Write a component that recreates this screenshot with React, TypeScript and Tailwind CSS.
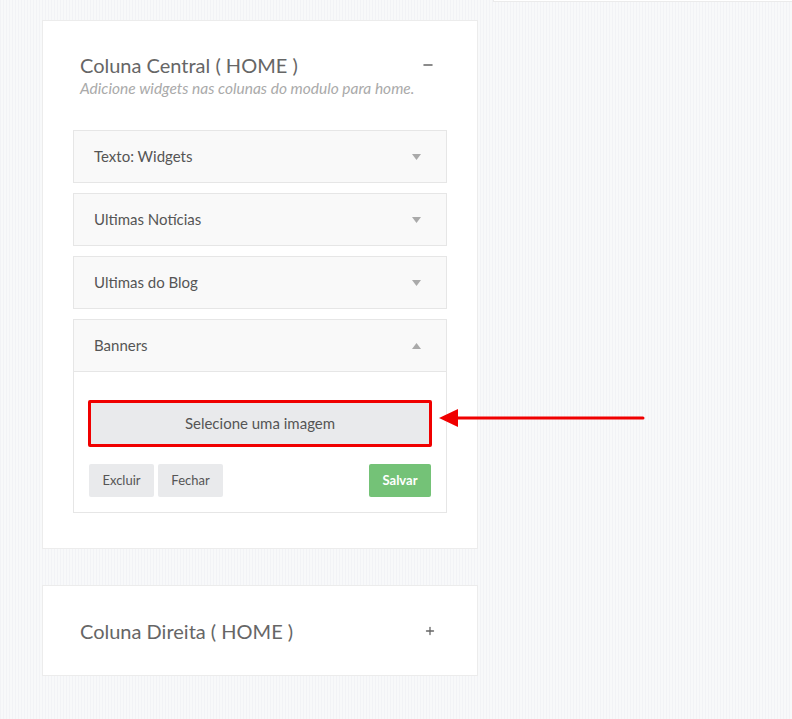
import { Minus, Plus } from 'lucide-react';

const ITEMS = ['Texto: Widgets', 'Ultimas Notícias', 'Ultimas do Blog'];

function Caret({ up }: { up?: boolean }) {
  return (
    <svg width="9" height="6" viewBox="0 0 9 6" className="shrink-0">
      {up ? <path d="M4.5 0L9 6H0z" fill="#aaa" /> : <path d="M0 0h9L4.5 6z" fill="#aaa" />}
    </svg>
  );
}

function WidgetRow({ title }: { title: string }) {
  return (
    <div className="h-[53px] border border-[#e6e6e6] bg-[#f9f9f9] flex items-center justify-between pl-[20px] pr-[25px]">
      <span className="text-[15px] text-[#555]">{title}</span>
      <Caret />
    </div>
  );
}

export default function App() {
  return (
    <div
      className="relative min-h-[719px] w-[792px] overflow-hidden bg-[#f5f6f8] bg-[repeating-linear-gradient(90deg,#f2f3f6_0px,#f2f3f6_1px,#f8f9fa_1px,#f8f9fa_3px)]"
      style={{ fontFamily: 'Lato, "Open Sans", sans-serif' }}
    >
      {/* top-right card edge */}
      <div className="absolute left-[493px] -top-[10px] w-[320px] h-[12px] bg-white border border-[#ebebeb]" />

      <div className="flex flex-col gap-[36px] pt-[20px] pl-[42px] w-[478px]">
        <div className="bg-white border border-[#ececec] px-[30px] pt-[31px] pb-[35px]">
          <div className="flex items-start justify-between pl-[7px] pr-[12px]">
            <div>
              <h2 className="text-[20px] leading-[26px] text-[#666]">Coluna Central ( HOME )</h2>
              <p className="text-[15.5px] leading-[20px] italic text-[#aaa]">Adicione widgets nas colunas do modulo para home.</p>
            </div>
            <Minus className="w-[14px] h-[14px] mt-[6px] text-[#666]" strokeWidth={2.2} />
          </div>

          <div className="mt-[32px] flex flex-col gap-[10px]">
            {ITEMS.map(t => <WidgetRow key={t} title={t} />)}
            <div className="border border-[#e6e6e6]">
              <div className="h-[52px] bg-[#f9f9f9] border-b border-[#e6e6e6] flex items-center justify-between pl-[20px] pr-[25px]">
                <span className="text-[15px] text-[#555]">Banners</span>
                <Caret up />
              </div>
              <div className="px-[14px] pt-[28px] pb-[15px]">
                <button className="w-[344px] h-[47px] bg-[#e9eaec] border-[3px] border-[#f00000] rounded-[2px] text-[15px] text-[#555]">
                  Selecione uma imagem
                </button>
                <div className="mt-[17px] flex items-center gap-[4px] pl-[1px]">
                  <button className="h-[33px] w-[65px] bg-[#e9eaec] rounded-[2px] text-[13px] text-[#555]">Excluir</button>
                  <button className="h-[33px] w-[65px] bg-[#e9eaec] rounded-[2px] text-[13px] text-[#555]">Fechar</button>
                  <button className="ml-auto mr-[1px] h-[33px] w-[62px] bg-[#74c277] rounded-[2px] text-[13px] font-bold text-white">Salvar</button>
                </div>
              </div>
            </div>
          </div>
        </div>

        <div className="h-[91px] bg-white border border-[#ececec] flex items-center justify-between pl-[37px] pr-[41px]">
          <h2 className="text-[20px] text-[#666]">Coluna Direita ( HOME )</h2>
          <Plus className="w-[12px] h-[12px] text-[#666]" strokeWidth={2.6} />
        </div>
      </div>

      {/* annotation arrow */}
      <svg className="absolute left-[436px] top-[406px]" width="212" height="24" viewBox="0 0 212 24">
        <line x1="20" y1="12" x2="207" y2="12" stroke="#f00000" strokeWidth="3" strokeLinecap="round" />
        <path d="M3 12L22 3V21z" fill="#f00000" />
      </svg>
    </div>
  );
}
